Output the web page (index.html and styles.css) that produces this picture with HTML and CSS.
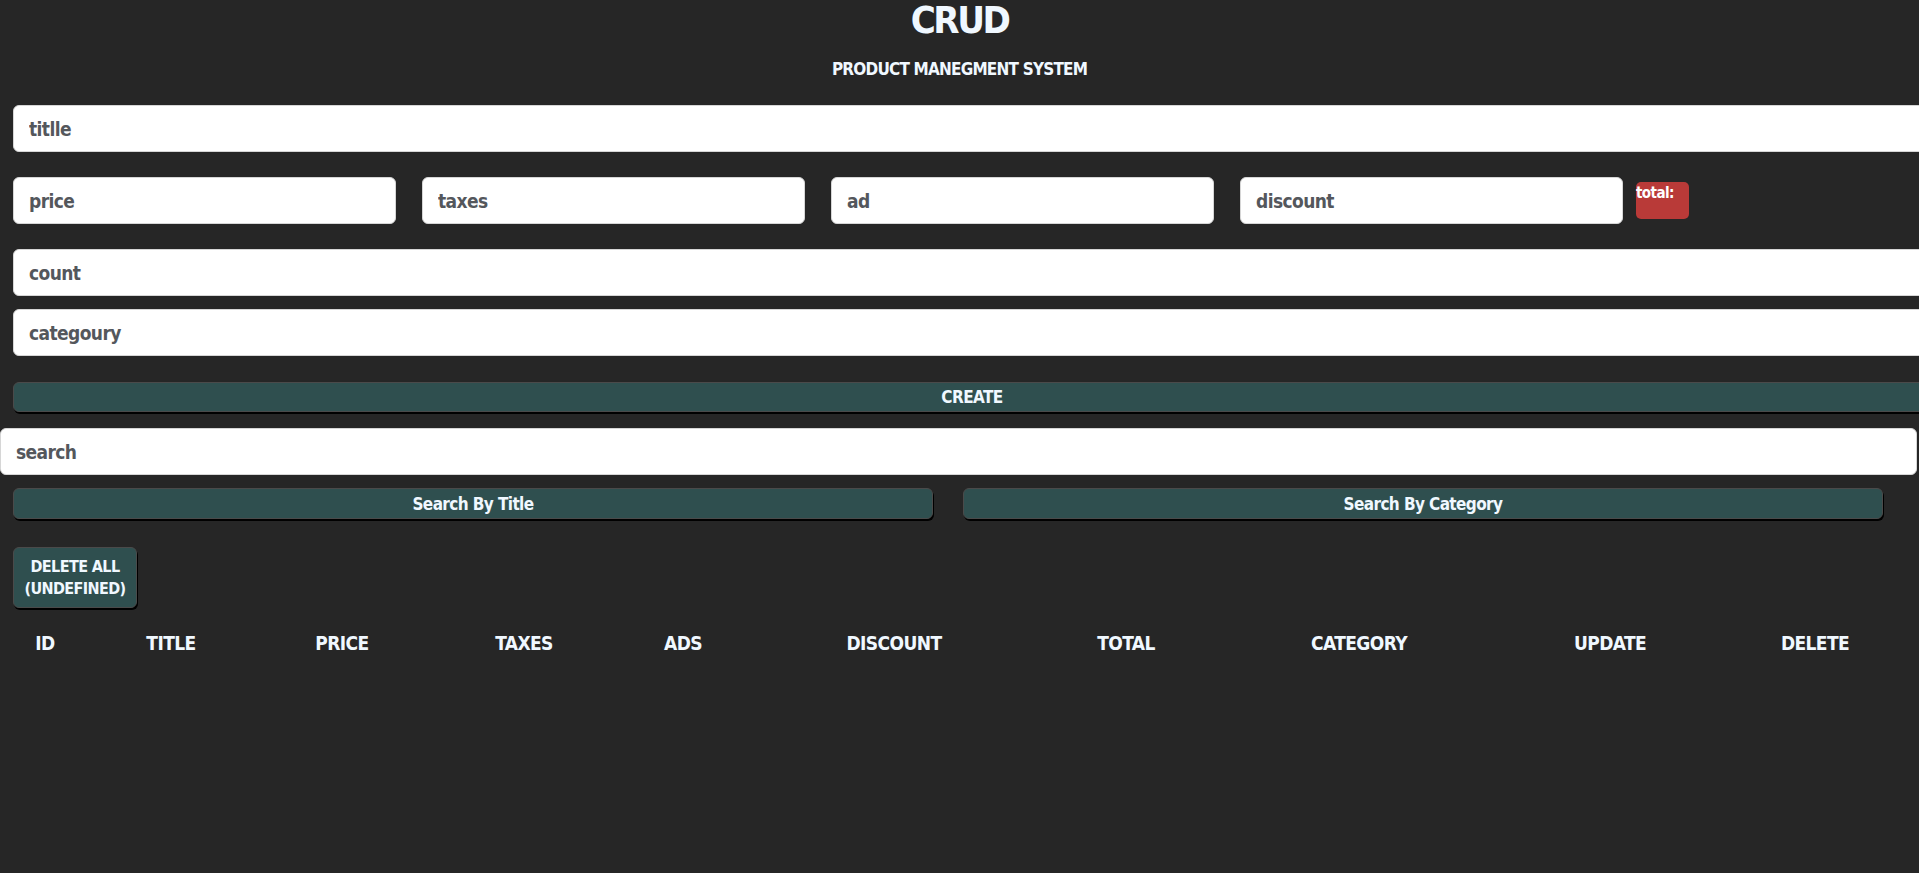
FILE: index.html
```html
<!DOCTYPE html>
<html>
<head>
<meta charset="utf-8">
<title>CRUD</title>
<link rel="stylesheet" href="styles.css">
</head>
<body>
<div class="app">
  <header class="head">
    <h1 class="brand">CRUD</h1>
    <p class="sub">PRODUCT MANEGMENT SYSTEM</p>
  </header>
  <section class="form">
    <input class="field wide" type="text" placeholder="titlle">
    <div class="price-row">
      <input class="field small" type="number" placeholder="price">
      <input class="field small" type="number" placeholder="taxes">
      <input class="field small" type="number" placeholder="ad">
      <input class="field small" type="number" placeholder="discount">
      <small class="total">total:</small>
    </div>
    <input class="field wide gap-md" type="number" placeholder="count">
    <input class="field wide gap-sm" type="text" placeholder="categoury">
    <button class="btn create">CREATE</button>
  </section>
  <section class="search">
    <input class="field search-field" type="text" placeholder="search">
    <div class="search-btns">
      <button class="btn sbtn">Search By Title</button>
      <button class="btn sbtn">Search By Category</button>
    </div>
  </section>
  <div class="delete-wrap">
    <button class="btn delete-all">DELETE ALL<br>(UNDEFINED)</button>
  </div>
  <table class="list">
    <colgroup>
      <col class="c-id"><col class="c-title"><col class="c-price"><col class="c-taxes"><col class="c-ads">
      <col class="c-discount"><col class="c-total"><col class="c-category"><col class="c-update"><col class="c-delete">
    </colgroup>
    <thead>
      <tr>
        <th>ID</th><th>TITLE</th><th>PRICE</th><th>TAXES</th><th>ADS</th>
        <th>DISCOUNT</th><th>TOTAL</th><th>CATEGORY</th><th>UPDATE</th><th>DELETE</th>
      </tr>
    </thead>
    <tbody></tbody>
  </table>
</div>
</body>
</html>
```
FILE: styles.css
```css
html, body {
  margin: 0;
  padding: 0;
  overflow: hidden;
}
body {
  background: #262626;
  color: aliceblue;
  font-family: Impact, "DejaVu Sans", sans-serif;
  font-stretch: condensed;
  font-weight: bold;
  letter-spacing: -0.6px;
  width: 1919px;
  height: 873px;
}
.app {
  width: 1919px;
}
.head {
  text-align: center;
}
.brand {
  margin: 0;
  font-size: 38px;
  line-height: 40px;
  font-weight: bold;
  letter-spacing: -2.5px;
}
.sub {
  margin: 19px 0 0;
  font-size: 17px;
  line-height: 20px;
  letter-spacing: -0.8px;
}
.form {
  padding-left: 13px;
  margin-top: 26px;
}
.field {
  display: block;
  box-sizing: border-box;
  height: 47px;
  background: #fff;
  border: 1px solid #d6d6d6;
  border-radius: 6px;
  padding: 0 15px;
  font-family: inherit;
  font-stretch: condensed;
  font-weight: bold;
  letter-spacing: -0.6px;
  font-size: 19px;
  color: #333;
  outline: none;
}
.field::placeholder {
  color: #54575c;
}
.field::-webkit-outer-spin-button,
.field::-webkit-inner-spin-button {
  -webkit-appearance: none;
  margin: 0;
}
.wide {
  width: 1918px;
}
.price-row {
  display: flex;
  align-items: flex-start;
  gap: 26px;
  margin-top: 25px;
}
.small {
  width: 383px;
}
.total {
  display: block;
  box-sizing: border-box;
  width: 53px;
  height: 37px;
  margin-top: 5px;
  margin-left: -13px;
  background: #b93a38;
  border-radius: 5px;
  color: #fff;
  font-size: 15px;
  line-height: 18px;
  padding-top: 2px;
}
.gap-md {
  margin-top: 25px;
}
.gap-sm {
  margin-top: 13px;
}
.btn {
  display: block;
  box-sizing: border-box;
  background: darkslategray;
  color: aliceblue;
  font-family: inherit;
  font-stretch: condensed;
  font-weight: bold;
  letter-spacing: -0.6px;
  border: 1px solid #4a4a4a;
  border-radius: 6px;
  box-shadow: 1px 2px 0 #000;
  cursor: pointer;
  padding: 0;
}
.create {
  width: 1918px;
  height: 30px;
  margin-top: 26px;
  font-size: 17px;
}
.search {
  margin-top: 16px;
}
.search-field {
  width: 1917px;
}
.search-btns {
  display: flex;
  gap: 30px;
  padding-left: 13px;
  margin-top: 13px;
}
.sbtn {
  width: 920px;
  height: 31px;
  font-size: 17px;
}
.delete-wrap {
  padding-left: 13px;
  margin-top: 28px;
}
.delete-all {
  width: 124px;
  height: 61px;
  font-size: 16px;
  line-height: 22px;
}
.list {
  margin-top: 23px;
  margin-left: 1px;
  border-collapse: separate;
  border-spacing: 0;
  table-layout: fixed;
  width: 1914px;
}
.list th {
  font-size: 19px;
  line-height: 24px;
  padding: 0;
  text-align: center;
  font-weight: bold;
}
.c-id { width: 88px; }
.c-title { width: 164px; }
.c-price { width: 178px; }
.c-taxes { width: 186px; }
.c-ads { width: 132px; }
.c-discount { width: 290px; }
.c-total { width: 174px; }
.c-category { width: 292px; }
.c-update { width: 210px; }
.c-delete { width: 200px; }
```
